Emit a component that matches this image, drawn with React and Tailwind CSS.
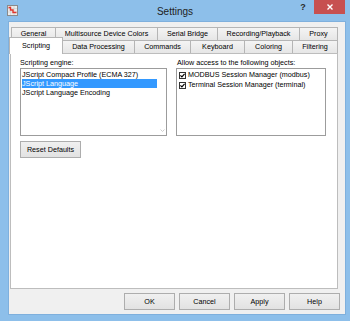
import React from "react";

const tabBase =
  "h-full flex items-center justify-center border-t border-l border-[#b5b5b5] bg-gradient-to-b from-[#f4f4f4] to-[#e6e6e6] text-[7.2px] leading-none text-black whitespace-nowrap";

const btn =
  "h-[17px] flex items-center justify-center border border-[#adadad] bg-gradient-to-b from-[#f0f0f0] to-[#e2e2e2] text-[7.2px] leading-none text-black";

function Check() {
  return (
    <div className="w-[7px] h-[7px] border border-[#333] bg-white flex items-center justify-center shrink-0">
      <svg width="5" height="5" viewBox="0 0 5 5">
        <path d="M0.4 2.4 L1.9 3.9 L4.6 0.8" fill="none" stroke="#000" strokeWidth="1.2" />
      </svg>
    </div>
  );
}

export default function App() {
  return (
    <div className="w-[350px] h-[321px] bg-[#8dbfea] flex flex-col font-['Liberation_Sans',Arial,sans-serif] overflow-hidden">
      {/* Title bar */}
      <div className="relative h-[21px] flex items-center justify-center">
        <div className="absolute left-[7px] top-[5px]">
          <svg width="11" height="11" viewBox="0 0 11 11">
            <rect x="0.5" y="0.5" width="10" height="10" fill="#ececec" stroke="#8a8a8a" />
            <path d="M3.5 1 V10 M7 1 V10 M1 3.5 H10 M1 7 H10" stroke="#cfcfcf" strokeWidth="0.6" />
            <path d="M1.5 2.5 H3.5 V5 H6 V7.5 H9.5" fill="none" stroke="#e0352b" strokeWidth="1.4" />
          </svg>
        </div>
        <span className="text-[10px] leading-none text-[#222] pt-[2px]">Settings</span>
        <div className="absolute right-[5px] top-0 flex">
          <div className="w-[22px] h-[14px] flex items-center justify-center text-[9px] font-bold text-[#2a2a2a] leading-none">?</div>
          <div className="w-[31px] h-[14px] bg-[#c75050] flex items-center justify-center">
            <svg width="6" height="6" viewBox="0 0 6 6">
              <path d="M0.5 0.5 L5.5 5.5 M5.5 0.5 L0.5 5.5" stroke="#fff" strokeWidth="1.4" />
            </svg>
          </div>
        </div>
      </div>

      {/* Body */}
      <div className="flex-1 flex pl-[8px] pr-[4px] pb-[6px]">
        <div className="flex-1 bg-[#f0f0f0] border border-[#7fb0dd] flex flex-col">
          {/* Tab row 1 */}
          <div className="mt-[5px] ml-[2px] h-[13px] flex">
            <div className={tabBase + " w-[44px]"}>General</div>
            <div className={tabBase + " w-[102px]"}>Multisource Device Colors</div>
            <div className={tabBase + " w-[60px]"}>Serial Bridge</div>
            <div className={tabBase + " w-[82px]"}>Recording/Playback</div>
            <div className={tabBase + " w-[39px] border-r"}>Proxy</div>
          </div>
          {/* Tab row 2 */}
          <div className="h-[13px] flex items-end">
            <div className="relative z-10 w-[54px] h-[17px] -mb-px bg-white border border-b-0 border-[#b5b5b5] flex items-start justify-center pt-[4px] text-[7.2px] leading-none text-black">
              Scripting
            </div>
            <div className={tabBase + " w-[71px] border-l-0"}>Data Processing</div>
            <div className={tabBase + " w-[56px]"}>Commands</div>
            <div className={tabBase + " w-[54px]"}>Keyboard</div>
            <div className={tabBase + " w-[48px]"}>Coloring</div>
            <div className={tabBase + " w-[46px] border-r"}>Filtering</div>
          </div>

          {/* Panel */}
          <div className="ml-px w-[328px] h-[236px] bg-white border border-[#bdbdbd] pt-[4px] pl-[9px] flex flex-col">
            <div className="flex gap-[9px]">
              {/* Left column */}
              <div className="w-[147px] flex flex-col">
                <div className="h-[10px] flex items-center text-[7.2px] leading-none text-black">Scripting engine:</div>
                <div className="h-[68px] border border-[#9c9c9c] bg-white flex">
                  <div className="flex-1 pt-px px-px flex flex-col text-[7.2px] leading-none">
                    <div className="h-[9px] flex items-center text-black">JScript Compact Profile (ECMA 327)</div>
                    <div className="h-[9px] flex items-center bg-[#3399ff] text-white">JScript Language</div>
                    <div className="h-[9px] flex items-center text-black">JScript Language Encoding</div>
                  </div>
                  <div className="w-[8px] flex flex-col justify-end items-center pb-[3px]">
                    <svg width="5" height="3" viewBox="0 0 5 3">
                      <path d="M0.5 0.5 L2.5 2.5 L4.5 0.5" fill="none" stroke="#c8c8c8" strokeWidth="0.9" />
                    </svg>
                  </div>
                </div>
                <div className={btn + " mt-[5px] w-[61px] h-[13px]"}>Reset Defaults</div>
              </div>
              {/* Right column */}
              <div className="w-[150px] flex flex-col">
                <div className="h-[10px] pl-px flex items-center text-[7.2px] leading-none text-black whitespace-nowrap">
                  Allow access to the following objects:
                </div>
                <div className="h-[68px] border border-[#9c9c9c] bg-white pt-px pl-[2px] flex flex-col text-[7.2px] leading-none text-black">
                  <div className="h-[10px] flex items-center gap-[2px]">
                    <Check />
                    <span>MODBUS Session Manager (modbus)</span>
                  </div>
                  <div className="h-[10px] flex items-center gap-[2px]">
                    <Check />
                    <span>Terminal Session Manager (terminal)</span>
                  </div>
                </div>
              </div>
            </div>
          </div>

          {/* Bottom buttons */}
          <div className="mt-[4px] pr-[5px] flex justify-end gap-[4px]">
            <div className={btn + " w-[51px] border-[#3c7fb1]"}>OK</div>
            <div className={btn + " w-[51px]"}>Cancel</div>
            <div className={btn + " w-[51px]"}>Apply</div>
            <div className={btn + " w-[51px]"}>Help</div>
          </div>
        </div>
      </div>
    </div>
  );
}
